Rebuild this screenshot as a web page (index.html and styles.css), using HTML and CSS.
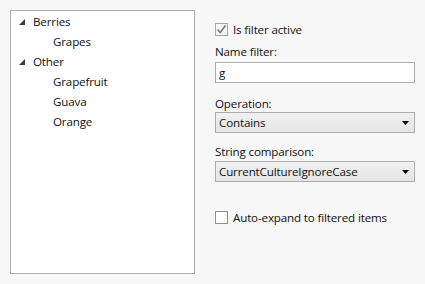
FILE: index.html
```html
<!DOCTYPE html>
<html>
<head>
    <title>Filter</title>
    <link rel="stylesheet" href="styles.css">
</head>
<body>
    <div class="window">
        <div class="tree">
            <div class="node">
                <svg class="expander" width="6" height="6" viewBox="0 0 6 6"><path d="M6,0 L6,6 L0,6 Z"/></svg>
                <span>Berries</span>
            </div>
            <div class="node child">Grapes</div>
            <div class="node">
                <svg class="expander" width="6" height="6" viewBox="0 0 6 6"><path d="M6,0 L6,6 L0,6 Z"/></svg>
                <span>Other</span>
            </div>
            <div class="node child">Grapefruit</div>
            <div class="node child">Guava</div>
            <div class="node child">Orange</div>
        </div>

        <div class="panel">
            <div class="check-row first">
                <span class="checkbox checked">
                    <svg width="11" height="11" viewBox="0 0 11 11"><path d="M1.5,5.5 L4.2,8.5 L9.5,1.5" fill="none" stroke="#7a7a7a" stroke-width="1.6"/></svg>
                </span>
                <span>Is filter active</span>
            </div>

            <div class="label name-label">Name filter:</div>
            <div class="textbox">g</div>

            <div class="label op-label">Operation:</div>
            <div class="combo">
                <span>Contains</span>
                <svg class="drop" width="7" height="4" viewBox="0 0 7 4"><path d="M0,0 L7,0 L3.5,4 Z"/></svg>
            </div>

            <div class="label cmp-label">String comparison:</div>
            <div class="combo">
                <span>CurrentCultureIgnoreCase</span>
                <svg class="drop" width="7" height="4" viewBox="0 0 7 4"><path d="M0,0 L7,0 L3.5,4 Z"/></svg>
            </div>

            <div class="check-row last">
                <span class="checkbox"></span>
                <span>Auto-expand to filtered items</span>
            </div>
        </div>
    </div>
</body>
</html>
```

FILE: styles.css
```css
body {
    margin: 0;
    background-color: #f7f7f7;
    font-family: "Open Sans", "Noto Sans", sans-serif;
    font-size: 11.6px;
    letter-spacing: -0.15px;
    color: #111;
}
.window {
    display: flex;
    padding: 10px;
}
.tree {
    width: 183px;
    height: 262px;
    border: 1px solid #abadb3;
    background-color: white;
    box-sizing: content-box;
}
.node {
    display: flex;
    align-items: center;
    height: 20px;
    padding-left: 8px;
}
.node.child {
    padding-left: 42px;
}
.expander {
    fill: #3c3c3c;
    margin-right: 8px;
    margin-top: 2px;
}
.panel {
    margin-left: 20px;
    width: 200px;
}
.check-row {
    display: flex;
    align-items: center;
    height: 17px;
}
.check-row.first {
    margin-top: 11px;
}
.check-row.last {
    margin-top: 27px;
}
.checkbox {
    width: 11px;
    height: 11px;
    border: 1px solid #8f8f8f;
    background-color: white;
    margin-right: 5px;
    display: flex;
    align-items: center;
    justify-content: center;
}
.checkbox.checked {
    background-color: #f4f4f4;
    border-color: #a6a6a6;
}
.label {
    line-height: 16px;
}
.name-label {
    margin-top: 6px;
    margin-bottom: 2px;
}
.op-label {
    margin-top: 13px;
}
.cmp-label {
    margin-top: 11px;
    margin-bottom: 1px;
}
.textbox {
    height: 19px;
    line-height: 19px;
    border: 1px solid #abadb3;
    background-color: white;
    padding-left: 3px;
}
.combo {
    height: 19px;
    border: 1px solid #acacac;
    background: linear-gradient(#f0f0f0, #e5e5e5);
    display: flex;
    align-items: center;
    justify-content: space-between;
    padding: 0 5px 0 3px;
}
.drop {
    fill: #000;
}
```
